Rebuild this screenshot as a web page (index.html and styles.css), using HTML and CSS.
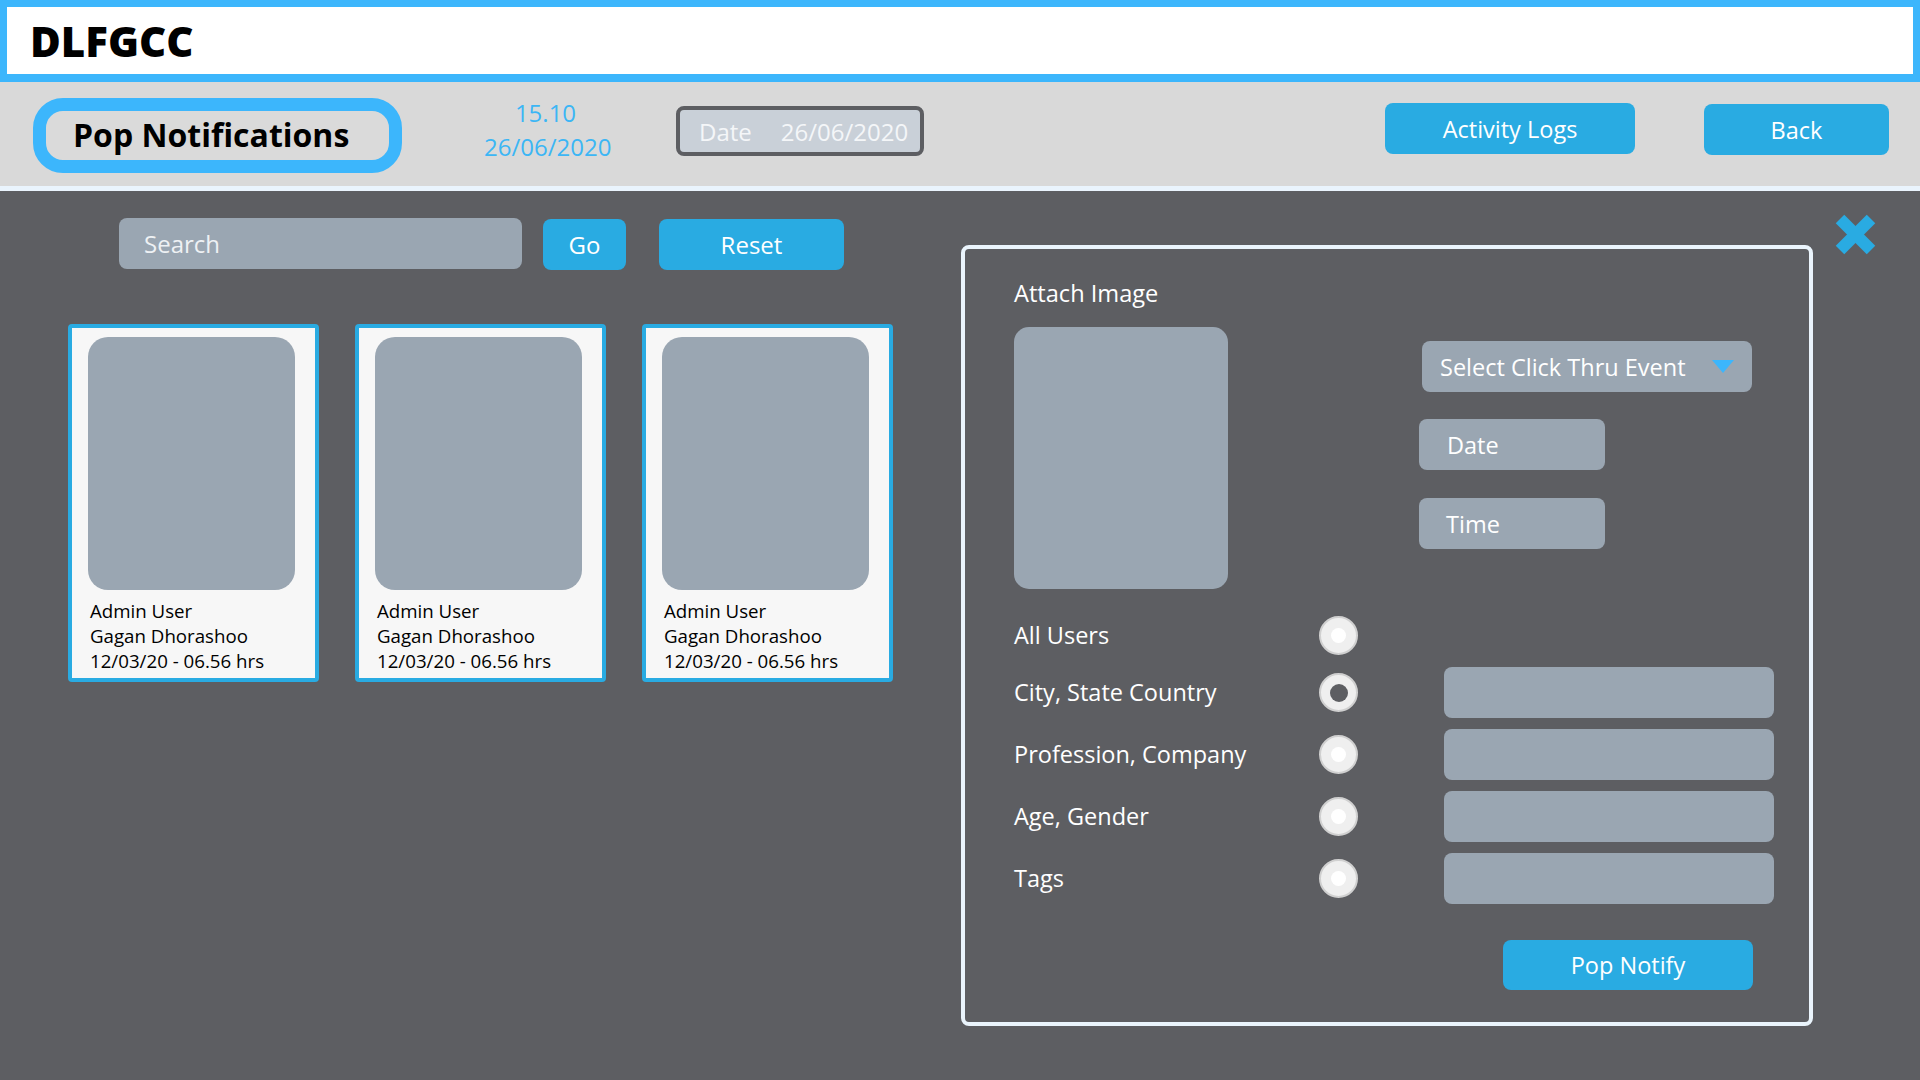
FILE: index.html
```html
<!DOCTYPE html>
<html lang="en">
<head>
<meta charset="utf-8">
<title>DLFGCC - Pop Notifications</title>
<link rel="stylesheet" href="styles.css">
</head>
<body>
<header class="brand-bar">
  <h1 class="brand">DLFGCC</h1>
</header>

<div class="top-bar">
  <div class="page-pill"><span>Pop Notifications</span></div>
  <div class="clock">
    <div>15.10</div>
    <div>26/06/2020</div>
  </div>
  <div class="date-box">
    <span class="date-label">Date</span>
    <span class="date-value">26/06/2020</span>
  </div>
  <button class="btn btn-activity">Activity Logs</button>
  <button class="btn btn-back">Back</button>
</div>

<main class="main">
  <section class="list-col">
    <div class="search-row">
      <div class="search-box">Search</div>
      <button class="btn btn-go">Go</button>
      <button class="btn btn-reset">Reset</button>
    </div>
    <div class="cards">
      <div class="card">
        <div class="card-img"></div>
        <div class="card-text">
          <div>Admin User</div>
          <div>Gagan Dhorashoo</div>
          <div>12/03/20 - 06.56 hrs</div>
        </div>
      </div>
      <div class="card">
        <div class="card-img"></div>
        <div class="card-text">
          <div>Admin User</div>
          <div>Gagan Dhorashoo</div>
          <div>12/03/20 - 06.56 hrs</div>
        </div>
      </div>
      <div class="card">
        <div class="card-img"></div>
        <div class="card-text">
          <div>Admin User</div>
          <div>Gagan Dhorashoo</div>
          <div>12/03/20 - 06.56 hrs</div>
        </div>
      </div>
    </div>
  </section>

  <section class="panel">
    <div class="panel-top">
      <div class="attach">
        <div class="attach-label">Attach Image</div>
        <div class="attach-img"></div>
      </div>
      <div class="event-col">
        <div class="field select">
          <span>Select Click Thru Event</span>
          <svg class="caret" width="22" height="13" viewBox="0 0 22 13"><polygon points="0,0 22,0 11,13" fill="#3cb6fc"/></svg>
        </div>
        <div class="field small">Date</div>
        <div class="field small">Time</div>
      </div>
    </div>

    <div class="options">
      <div class="opt-row first">
        <span class="opt-label">All Users</span>
        <span class="radio"></span>
      </div>
      <div class="opt-row">
        <span class="opt-label">City, State Country</span>
        <span class="radio checked"></span>
        <span class="opt-input"></span>
      </div>
      <div class="opt-row">
        <span class="opt-label">Profession, Company</span>
        <span class="radio"></span>
        <span class="opt-input"></span>
      </div>
      <div class="opt-row">
        <span class="opt-label">Age, Gender</span>
        <span class="radio"></span>
        <span class="opt-input"></span>
      </div>
      <div class="opt-row">
        <span class="opt-label">Tags</span>
        <span class="radio"></span>
        <span class="opt-input"></span>
      </div>
    </div>

    <button class="btn btn-notify">Pop Notify</button>
  </section>

  <button class="close" aria-label="Close">
    <svg width="43" height="43" viewBox="0 0 43 43">
      <line x1="6" y1="6" x2="37" y2="37" stroke="#29abe2" stroke-width="12"/>
      <line x1="37" y1="6" x2="6" y2="37" stroke="#29abe2" stroke-width="12"/>
    </svg>
  </button>
</main>
</body>
</html>
```

FILE: styles.css
```css
* { box-sizing: border-box; }

html, body {
  margin: 0;
  padding: 0;
}

body {
  width: 1920px;
  height: 1080px;
  overflow: hidden;
  background: #5d5e62;
  font-family: "Open Sans", "Liberation Sans", sans-serif;
  color: #ffffff;
}

button {
  font-family: inherit;
  border: none;
  padding: 0;
  cursor: pointer;
}

/* ---------- brand bar ---------- */
.brand-bar {
  height: 82px;
  background: #ffffff;
  border-style: solid;
  border-color: #3cb6fc;
  border-width: 7px 7px 8px 7px;
  display: flex;
  align-items: center;
  padding-left: 23px;
}

.brand {
  margin: 0;
  font-size: 42px;
  font-weight: 800;
  color: #000000;
  line-height: 1;
}

/* ---------- top bar ---------- */
.top-bar {
  height: 109px;
  background: #d9d9d9;
  border-bottom: 5px solid #eaf4fd;
  display: flex;
  align-items: flex-start;
  padding-left: 33px;
  padding-right: 31px;
}

.page-pill {
  margin-top: 16px;
  width: 369px;
  height: 75px;
  border: 13px solid #3cb6fc;
  border-radius: 30px;
  background: #dadada;
  display: flex;
  align-items: center;
  padding-left: 27px;
}

.page-pill span {
  font-size: 32px;
  font-weight: 700;
  color: #000000;
  line-height: 1;
  margin-top: -2px;
}

.clock {
  margin-top: 14px;
  margin-left: 82px;
  width: 126px;
  text-align: center;
  color: #3cb6f5;
  font-size: 24px;
  line-height: 34px;
}

.clock div:first-child {
  margin-left: -3px;
}

.date-box {
  margin-top: 24px;
  margin-left: 66px;
  width: 248px;
  height: 50px;
  border: 4px solid #5d5e62;
  border-radius: 8px;
  background: #c9d0d8;
  display: flex;
  align-items: center;
  padding-left: 19px;
  font-size: 24px;
  color: #f4f6f8;
}

.date-value {
  margin-left: 29px;
}

.btn {
  background: #29abe2;
  color: #ffffff;
  font-size: 23.5px;
  border-radius: 8px;
  display: flex;
  align-items: center;
  justify-content: center;
}

.btn-activity {
  margin-top: 21px;
  margin-left: auto;
  width: 250px;
  height: 51px;
}

.btn-back {
  margin-top: 22px;
  margin-left: 69px;
  width: 185px;
  height: 51px;
}

/* ---------- main ---------- */
.main {
  display: flex;
  align-items: flex-start;
}

.list-col {
  width: 825px;
  margin-left: 68px;
  padding-top: 27px;
}

.search-row {
  display: flex;
  align-items: flex-start;
  margin-left: 51px;
}

.search-box {
  width: 403px;
  height: 51px;
  border-radius: 8px;
  background: #9aa6b2;
  color: #eef1f4;
  font-size: 24px;
  display: flex;
  align-items: center;
  padding-left: 25px;
}

.btn-go {
  margin-left: 21px;
  margin-top: 1px;
  width: 83px;
  height: 51px;
  font-size: 24px;
}

.btn-reset {
  margin-left: 33px;
  margin-top: 1px;
  width: 185px;
  height: 51px;
  font-size: 24px;
}

.cards {
  display: flex;
  gap: 36px;
  margin-top: 54px;
}

.card {
  width: 251px;
  height: 358px;
  background: #f7f7f7;
  border: 4px solid #29abe2;
  border-radius: 4px;
  padding: 9px 16px 0 16px;
}

.card-img {
  width: 207px;
  height: 253px;
  background: #9aa6b2;
  border-radius: 20px;
}

.card-text {
  margin-top: 8px;
  padding-left: 2px;
  color: #000000;
  font-size: 18.7px;
  line-height: 25px;
  white-space: nowrap;
}

/* ---------- panel ---------- */
.panel {
  margin-top: 54px;
  margin-left: 68px;
  width: 852px;
  height: 781px;
  border: 4px solid #eaf4fc;
  border-radius: 8px;
  padding: 28px 0 0 49px;
  display: flex;
  flex-direction: column;
  align-items: flex-start;
}

.panel-top {
  display: flex;
  align-items: flex-start;
}

.attach {
  width: 405px;
}

.attach-label {
  font-size: 23.6px;
  line-height: 33px;
  color: #ffffff;
}

.attach-img {
  margin-top: 17px;
  width: 214px;
  height: 262px;
  border-radius: 15px;
  background: #9aa6b2;
}

.event-col {
  display: flex;
  flex-direction: column;
  align-items: flex-start;
  margin-top: 64px;
}

.field {
  height: 51px;
  border-radius: 8px;
  background: #9aa6b2;
  font-size: 23.5px;
  color: #ffffff;
  display: flex;
  align-items: center;
}

.field.select {
  margin-left: 3px;
  width: 330px;
  padding-left: 18px;
}

.field.select .caret {
  margin-left: 26px;
}

.field.small {
  width: 186px;
  padding-left: 28px;
}

.field.small + .field.small {
  margin-top: 28px;
  padding-left: 27px;
}

.field.select + .field.small {
  margin-top: 27px;
}

.options {
  margin-top: 21px;
  display: flex;
  flex-direction: column;
  gap: 11px;
}

.opt-row {
  display: grid;
  grid-template-columns: 305px 39px 416px;
  align-items: center;
  height: 51px;
}

.opt-row.first {
  margin-bottom: -5px;
}

.opt-input {
  grid-column: 3;
  margin-left: 86px;
  width: 330px;
  height: 51px;
  border-radius: 8px;
  background: #9aa6b2;
}

.opt-label {
  font-size: 23.5px;
  color: #ffffff;
  line-height: 33px;
  white-space: nowrap;
}

.radio {
  width: 39px;
  height: 39px;
  border-radius: 50%;
  background: #efefef;
  border: 2px solid #d0d0d0;
  display: flex;
  align-items: center;
  justify-content: center;
}

.radio::after {
  content: "";
  width: 15px;
  height: 15px;
  border-radius: 50%;
  background: #ffffff;
}

.radio.checked::after {
  width: 18px;
  height: 18px;
  background: #5d5e62;
}

.btn-notify {
  margin-top: 36px;
  margin-left: 489px;
  width: 250px;
  height: 50px;
}

.close {
  background: transparent;
  margin-top: 22px;
  margin-left: 21px;
  width: 43px;
  height: 43px;
  display: block;
}

.close svg {
  display: block;
}
```
